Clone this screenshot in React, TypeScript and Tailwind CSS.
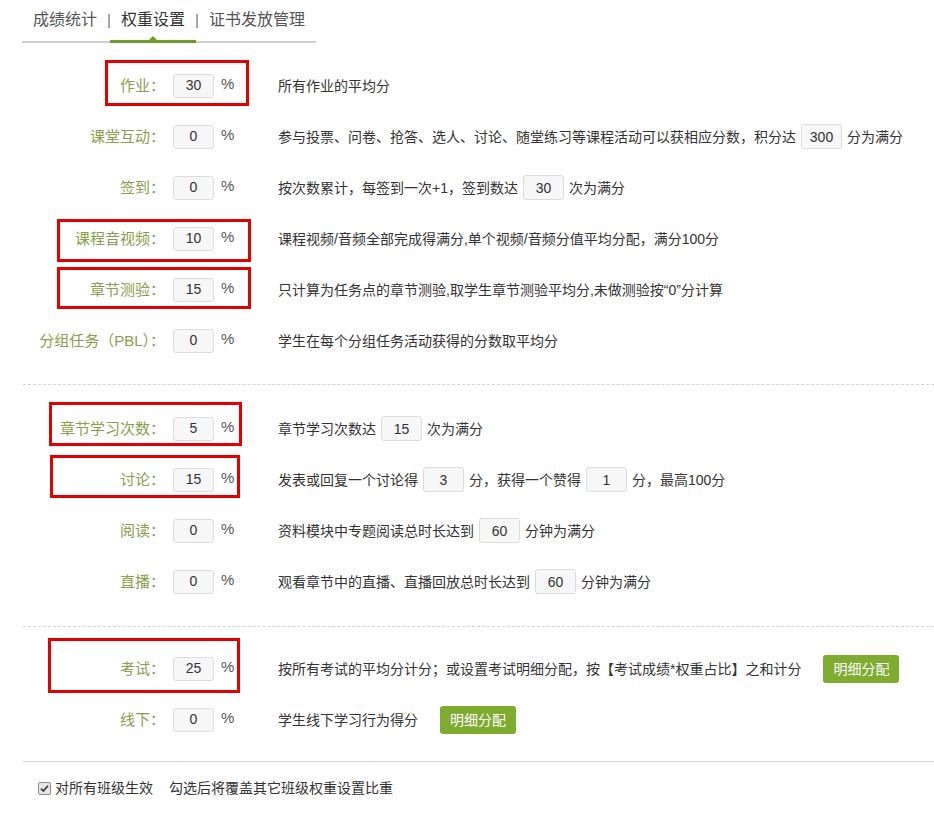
import React from "react";

// ─── Small pieces ────────────────────────────────────────────────

function NumBox({ value, inline = false }: { value: string; inline?: boolean }) {
  return (
    <span
      className={`inline-flex w-[41px] items-center justify-center rounded-[3px] border border-[#dcdcdc] bg-[#f7f7f7] text-[14px] text-[#333] ${
        inline ? "mx-[5px] h-[25px]" : "h-6"
      }`}
    >
      {value}
    </span>
  );
}

function DetailButton({ className = "" }: { className?: string }) {
  return (
    <button
      type="button"
      className={`h-[28px] w-[76px] rounded-[3px] bg-[#7dac31] text-[14px] text-white ${className}`}
    >
      明细分配
    </button>
  );
}

interface WeightRowProps {
  label: string;
  value: string;
  children: React.ReactNode;
}

function WeightRow({ label, value, children }: WeightRowProps) {
  return (
    <div className="flex h-[51px] items-center">
      <span className="w-[142px] whitespace-nowrap text-right text-[15px] leading-5 text-[#8a9e4d]">
        {label}：
      </span>
      <div className="ml-2 flex w-[105px] items-center">
        <NumBox value={value} />
        <span className="-mt-[4px] ml-[7px] text-[15px] leading-5 text-[#555]">%</span>
      </div>
      <div className="flex items-center whitespace-nowrap text-[14px] leading-5 text-[#333]">
        {children}
      </div>
    </div>
  );
}

// ─── Tabs ────────────────────────────────────────────────────────

const tabs = ["成绩统计", "权重设置", "证书发放管理"];

function Tabs() {
  return (
    <div className="ml-[22px] flex w-fit items-center whitespace-nowrap border-b-2 border-[#d0d0d0]">
      {tabs.map((t, i) => (
        <React.Fragment key={t}>
          {i > 0 && (
            <span className="flex w-[2px] justify-center pb-[9px] pt-[8px] text-[15px] leading-6 text-[#777]">
              |
            </span>
          )}
          <span
            className={`relative px-[11px] pb-[9px] pt-[8px] text-[16px] leading-6 ${
              i === 1 ? "text-[#333]" : "text-[#555]"
            }`}
          >
            {t}
            {i === 1 && (
              <>
                <span className="absolute -bottom-[2px] left-0 right-0 h-[3px] bg-[#6f9a2c]" />
                <span className="absolute -bottom-[1px] left-1/2 h-0 w-0 -translate-x-1/2 border-x-[6px] border-b-[6px] border-x-transparent border-b-[#6f9a2c]" />
              </>
            )}
          </span>
        </React.Fragment>
      ))}
    </div>
  );
}

// ─── Red annotation boxes ────────────────────────────────────────

function Marks() {
  return (
    <>
      <div className="absolute left-[105px] top-[60px] h-[46px] w-[144px] border-[3px] border-[#e40000]" />
      <div className="absolute left-[57px] top-[219px] h-[43px] w-[194px] border-[3px] border-[#e40000]" />
      <div className="absolute left-[57px] top-[267px] h-[42px] w-[194px] border-[3px] border-[#e40000]" />
      <div className="absolute left-[49px] top-[402px] h-[44px] w-[193px] border-[3px] border-[#e40000]" />
      <div className="absolute left-[50px] top-[455px] h-[43px] w-[190px] border-[3px] border-[#e40000]" />
      <div className="absolute left-[48px] top-[638px] h-[55px] w-[192px] border-[3px] border-[#e40000]" />
    </>
  );
}

// ─── Page ────────────────────────────────────────────────────────

export default function App() {
  return (
    <div className="relative min-h-[816px] w-full bg-white font-['Liberation_Sans','Noto_Sans_CJK_SC',sans-serif]">
      <Tabs />

      <div className="ml-[23px]">
        <div className="border-b border-dashed border-[#d4d4d4] pb-[18px] pt-[17px]">
          <WeightRow label="作业" value="30">所有作业的平均分</WeightRow>
          <WeightRow label="课堂互动" value="0">
            参与投票、问卷、抢答、选人、讨论、随堂练习等课程活动可以获相应分数，积分达
            <NumBox value="300" inline />
            分为满分
          </WeightRow>
          <WeightRow label="签到" value="0">
            按次数累计，每签到一次+1，签到数达
            <NumBox value="30" inline />
            次为满分
          </WeightRow>
          <WeightRow label="课程音视频" value="10">
            课程视频/音频全部完成得满分,单个视频/音频分值平均分配，满分100分
          </WeightRow>
          <WeightRow label="章节测验" value="15">
            只计算为任务点的章节测验,取学生章节测验平均分,未做测验按“0”分计算
          </WeightRow>
          <WeightRow label="分组任务（PBL）" value="0">
            学生在每个分组任务活动获得的分数取平均分
          </WeightRow>
        </div>

        <div className="border-b border-dashed border-[#d4d4d4] pb-[19px] pt-[18px]">
          <WeightRow label="章节学习次数" value="5">
            章节学习次数达
            <NumBox value="15" inline />
            次为满分
          </WeightRow>
          <WeightRow label="讨论" value="15">
            发表或回复一个讨论得
            <NumBox value="3" inline />
            分，获得一个赞得
            <NumBox value="1" inline />
            分，最高100分
          </WeightRow>
          <WeightRow label="阅读" value="0">
            资料模块中专题阅读总时长达到
            <NumBox value="60" inline />
            分钟为满分
          </WeightRow>
          <WeightRow label="直播" value="0">
            观看章节中的直播、直播回放总时长达到
            <NumBox value="60" inline />
            分钟为满分
          </WeightRow>
        </div>

        <div className="border-b border-[#d4d4d4] pb-4 pt-[16px]">
          <WeightRow label="考试" value="25">
            按所有考试的平均分计分；或设置考试明细分配，按【考试成绩*权重占比】之和计分
            <DetailButton className="ml-[22px]" />
          </WeightRow>
          <WeightRow label="线下" value="0">
            学生线下学习行为得分
            <DetailButton className="ml-[22px]" />
          </WeightRow>
        </div>

        <div className="flex items-center pl-[15px] pt-[16px] text-[14px] leading-5 text-[#333]">
          <span className="flex h-[13px] w-[13px] items-center justify-center rounded-[2px] border border-[#8f8f8f] bg-[#e6e6e6]">
            <svg width="9" height="9" viewBox="0 0 9 9">
              <path d="M1 4.6 L3.4 7 L8 1.8" fill="none" stroke="#333" strokeWidth="1.6" />
            </svg>
          </span>
          <span className="ml-[4px]">对所有班级生效</span>
          <span className="ml-4">勾选后将覆盖其它班级权重设置比重</span>
        </div>
      </div>

      <Marks />
    </div>
  );
}
